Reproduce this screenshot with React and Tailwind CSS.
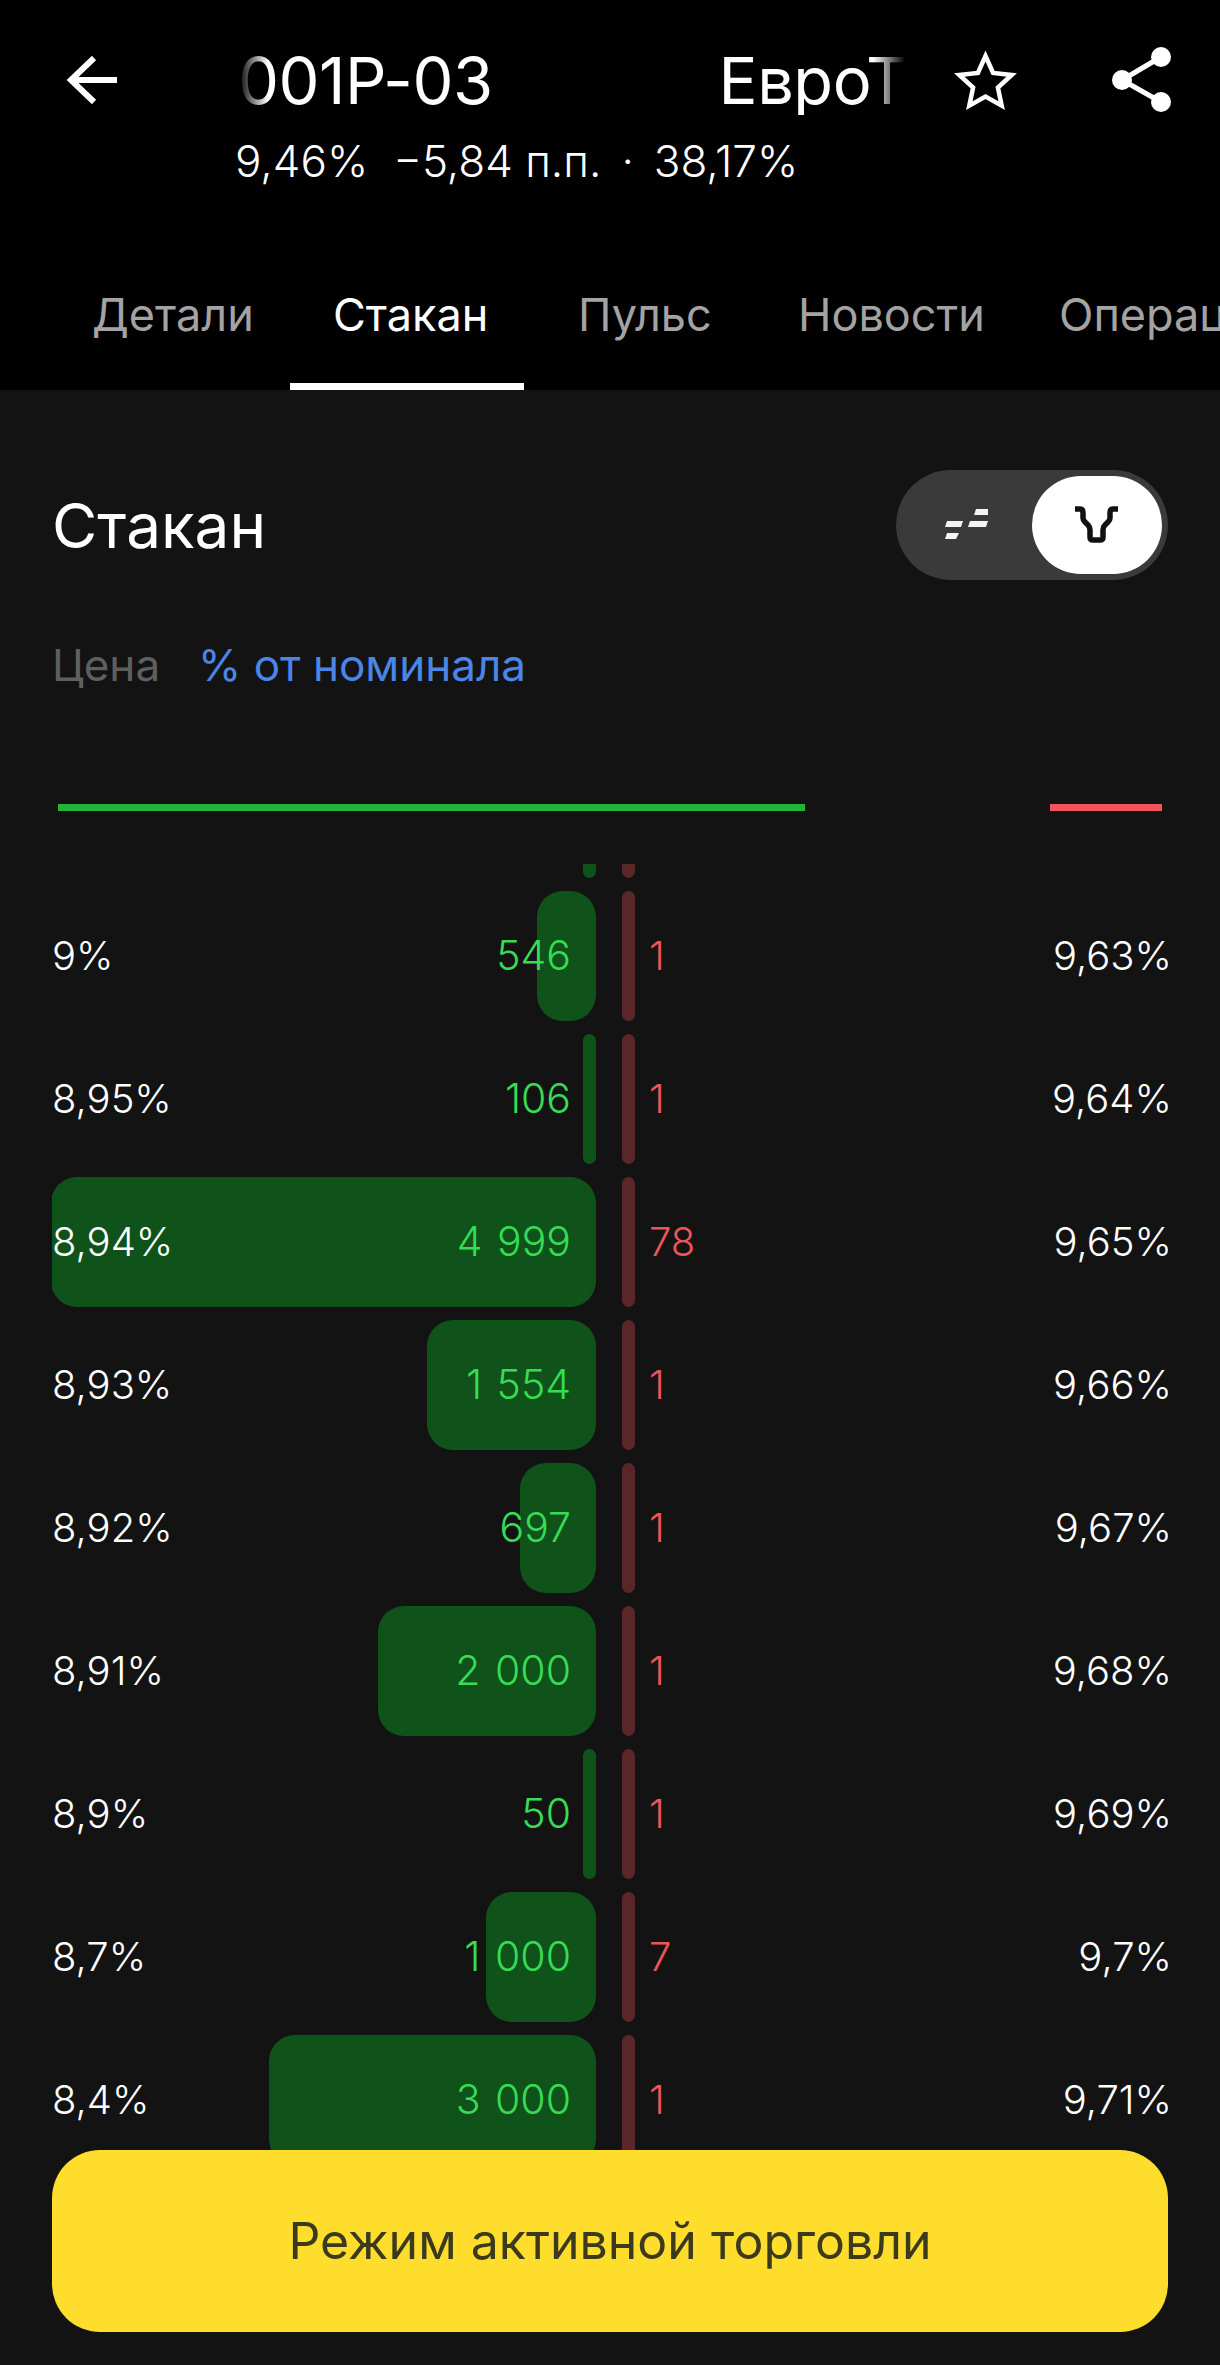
const rows = [
  { bid: "9%", qty: "546", w: 59, red: "1", ask: "9,63%" },
  { bid: "8,95%", qty: "106", w: 13, red: "1", ask: "9,64%" },
  { bid: "8,94%", qty: "4 999", w: 545, red: "78", ask: "9,65%" },
  { bid: "8,93%", qty: "1 554", w: 169, red: "1", ask: "9,66%" },
  { bid: "8,92%", qty: "697", w: 76, red: "1", ask: "9,67%" },
  { bid: "8,91%", qty: "2 000", w: 218, red: "1", ask: "9,68%" },
  { bid: "8,9%", qty: "50", w: 13, red: "1", ask: "9,69%" },
  { bid: "8,7%", qty: "1 000", w: 110, red: "7", ask: "9,7%" },
  { bid: "8,4%", qty: "3 000", w: 327, red: "1", ask: "9,71%" },
];

const tabs = [
  { label: "Детали", w: "w-[241px]" },
  { label: "Стакан", w: "w-[245px]", active: true },
  { label: "Пульс", w: "w-[220px]" },
  { label: "Новости", w: "w-[261px]" },
  { label: "Операции", w: "w-[261px]" },
];

function BackIcon() {
  return (
    <svg width="54" height="56" viewBox="0 0 54 56" fill="none" stroke="#fff" strokeWidth="6">
      <path d="M52 28H6M29 6 6 28l23 22" />
    </svg>
  );
}

function StarIcon() {
  return (
    <svg width="65" height="63" viewBox="0 0 65 63" fill="none">
      <path
        d="M32.5 7 40.1 24 58.7 26 44.9 38.5 48.7 56.7 32.5 47.5 16.3 56.7 20.1 38.5 6.3 26 24.9 24z"
        stroke="#fff"
        strokeWidth="4.5"
        strokeMiterlimit="10"
      />
    </svg>
  );
}

function ShareIcon() {
  return (
    <svg width="60" height="66" viewBox="0 0 60 66" fill="none">
      <path d="M49 10 10 33l39 22" stroke="#fff" strokeWidth="5" />
      <circle cx="49" cy="10" r="10" fill="#fff" />
      <circle cx="10" cy="33" r="10" fill="#fff" />
      <circle cx="49" cy="55" r="10" fill="#fff" />
    </svg>
  );
}

function DashIcon() {
  return (
    <svg width="44" height="32" viewBox="0 0 44 32" fill="#f4f4f4">
      <path d="M3 12h16l-2 6H1zM3 24h12l-3 6H1zM26 12h18l-2 6H24zM32 0h12v6H30z" />
    </svg>
  );
}

function BullIcon() {
  return (
    <svg width="44" height="38" viewBox="0 0 44 38" fill="none">
      <path
        d="M0 3h5q3 0 3 4v5q0 2 2 4l3 3q2 2 2 5v7q0 3 3 3h7q3 0 3-3v-7q0-3 2-5l3-3q2-2 2-4V7q0-4 3-4h5"
        stroke="#111"
        strokeWidth="5.5"
      />
    </svg>
  );
}

function Row({ row }) {
  return (
    <div className="flex h-[130px] mb-[13px] text-[40px] font-light items-center">
      <div className="relative w-[544px] h-full flex items-center justify-between">
        <div
          className="absolute right-0 inset-y-0 bg-[#0f531b] rounded-[26px]"
          style={{ width: row.w }}
        />
        <span className="relative text-white">{row.bid}</span>
        <span className="relative text-[41px] [word-spacing:3px] text-[#36dc55] mr-[25px]">{row.qty}</span>
      </div>
      <div className="w-[13px] h-full ml-[26px] bg-[#5a2628] rounded-full" />
      <span className="ml-[14px] text-[#ee5558]">{row.red}</span>
      <span className="ml-auto -mr-[4px] text-white">{row.ask}</span>
    </div>
  );
}

export default function App() {
  return (
    <div className="relative h-[2365px] overflow-hidden bg-[#131313] font-['Inter',sans-serif]">
      {/* шапка */}
      <div className="h-[390px] bg-black relative">
        <div className="flex items-start pt-[47px] h-[136px]">
          <div className="ml-[65px] mt-[5px]">
            <BackIcon />
          </div>
          <div className="ml-[119px] w-[667px] overflow-hidden [mask-image:linear-gradient(90deg,transparent,black_30px,black_635px,transparent_667px)]">
            <div className="flex whitespace-nowrap text-[65px] tracking-[-0.5px] leading-[68px] text-white">
              <span>001P-03</span>
              <span className="ml-[226px]">ЕвроТранс</span>
            </div>
          </div>
          <div className="ml-[48px] mt-[2px]">
            <StarIcon />
          </div>
          <div className="ml-[94px]">
            <ShareIcon />
          </div>
        </div>
        <div className="ml-[235px] flex whitespace-nowrap text-[44px] leading-[50px] font-light text-white">
          <span>9,46%</span>
          <span className="ml-[25px]">−5,84 п.п.</span>
          <span className="ml-[20px]">·</span>
          <span className="ml-[20px]">38,17%</span>
        </div>
        <div className="absolute left-[92px] right-0 bottom-0 h-[120px] flex overflow-hidden text-[45px] leading-none">
          {tabs.map((t) => (
            <div key={t.label} className={`shrink-0 ${t.w} ${t.active ? "text-white" : "text-[#a3a3a3]"} pt-[22px] whitespace-nowrap`}>
              {t.label}
            </div>
          ))}
        </div>
        <div className="absolute left-[290px] bottom-0 w-[234px] h-[7px] bg-white" />
      </div>

      {/* стакан */}
      <div className="px-[52px]">
        <div className="flex items-center justify-between pt-[80px] h-[190px]">
          <h1 className="text-[62px] text-white">Стакан</h1>
          <div className="w-[272px] h-[110px] rounded-full bg-[#3a3a3a] flex items-center justify-between pl-[48px] pr-[6px]">
            <DashIcon />
            <div className="w-[130px] h-[98px] rounded-full bg-white flex items-center justify-center">
              <BullIcon />
            </div>
          </div>
        </div>
        <div className="flex gap-[38px] mt-[60px] text-[44px] leading-[50px]">
          <span className="text-[#5f5f5f]">Цена</span>
          <span className="text-[#4a85e8]">% от номинала</span>
        </div>
        <div className="mt-[114px] flex justify-between pl-[6px] pr-[6px]">
          <div className="w-[747px] h-[7px] bg-[#22b53a]" />
          <div className="w-[112px] h-[7px] bg-[#f2545b]" />
        </div>
        <div className="mt-[53px] h-[1450px] overflow-hidden">
          <div className="-mt-[116px]">
            <Row row={{ bid: "", qty: "", w: 13, red: "", ask: "" }} />
            {rows.map((r) => (
              <Row key={r.bid} row={r} />
            ))}
          </div>
        </div>
      </div>

      <button className="absolute left-[52px] right-[52px] top-[2150px] h-[182px] rounded-[48px] bg-[#ffdd2d] text-[50px] text-[#3c3a1c]">
        Режим активной торговли
      </button>
    </div>
  );
}
